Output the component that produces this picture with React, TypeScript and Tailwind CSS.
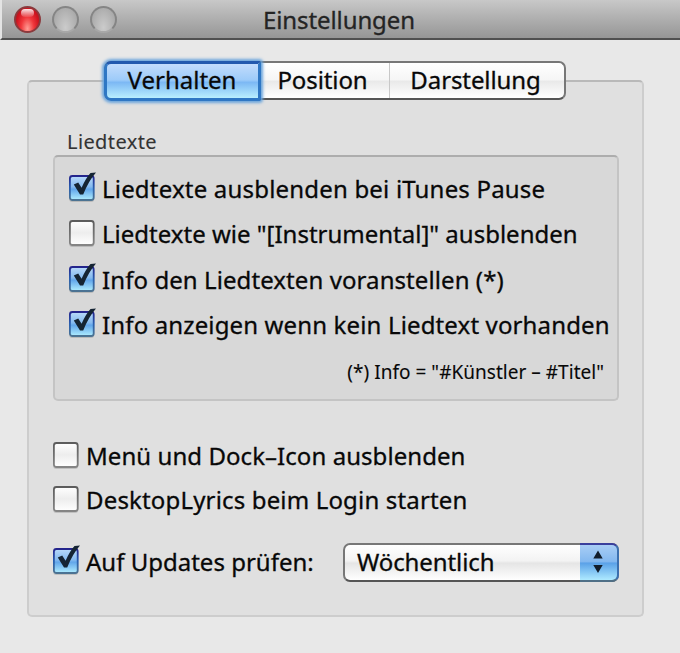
import { useState } from "react";

type CheckboxProps = {
  label: string;
  defaultChecked?: boolean;
  className?: string;
  textClassName?: string;
};

function Checkbox({ label, defaultChecked = false, className = "", textClassName = "" }: CheckboxProps) {
  const [checked, setChecked] = useState(defaultChecked);

  return (
    <button
      role="checkbox"
      aria-checked={checked}
      onClick={() => setChecked(!checked)}
      className={`flex items-center gap-[7px] text-left ${className}`}
    >
      <svg className="w-[29px] h-[34px] -mr-[3px] shrink-0" viewBox="0 0 29 34">
        <defs>
          <linearGradient id="boxOn" x1="0" y1="0" x2="0" y2="1">
            <stop offset="0" stopColor="#b9dafa" />
            <stop offset="0.45" stopColor="#86baef" />
            <stop offset="0.55" stopColor="#62a6ea" />
            <stop offset="1" stopColor="#b0eeff" />
          </linearGradient>
          <linearGradient id="boxOnEdge" x1="0" y1="0" x2="0" y2="1">
            <stop offset="0" stopColor="#24248c" />
            <stop offset="0.5" stopColor="#285fb0" />
            <stop offset="1" stopColor="#4c7392" />
          </linearGradient>
          <linearGradient id="boxOff" x1="0" y1="0" x2="0" y2="1">
            <stop offset="0" stopColor="#ffffff" />
            <stop offset="0.5" stopColor="#ededed" />
            <stop offset="1" stopColor="#ffffff" />
          </linearGradient>
          <linearGradient id="boxOffEdge" x1="0" y1="0" x2="0" y2="1">
            <stop offset="0" stopColor="#5c5c5c" />
            <stop offset="1" stopColor="#858585" />
          </linearGradient>
        </defs>
        <rect x="0.2" y="5" width="25" height="25" rx="3" fill="#000" opacity="0.14" />
        <rect
          x="0.9"
          y="4"
          width="23.8"
          height="24"
          rx="2.5"
          fill={checked ? "url(#boxOn)" : "url(#boxOff)"}
          stroke={checked ? "url(#boxOnEdge)" : "url(#boxOffEdge)"}
          strokeWidth="1.8"
        />
        {checked && (
          <path d="M4.8 12.5 L9.2 10.5 L12.6 15.8 Q16.5 6.500 21.500 1 L27 0.500 Q19.500 9 14.200 22.500 L11 22.500 Z" fill="#152433" />
        )}
      </svg>
      <span className={`whitespace-nowrap ${textClassName}`}>{label}</span>
    </button>
  );
}

function TitleBar() {
  return (
    <header className="flex items-center h-[40px] pl-[12px] gap-[11px] border-l-2 border-l-[#e4e4e4] border-b-2 border-b-[#505050] bg-linear-to-b from-[#c8c8c8] to-[#969696]">
      <span className="w-[27px] h-[27px] rounded-full border-2 border-[#8b3a3d] bg-[radial-gradient(ellipse_at_50%_90%,#ff9d95_0%,#f0373b_40%,#d01520_70%,#a91019_100%)] flex justify-center">
        <span className="w-[13px] h-[8px] mt-px rounded-full bg-linear-to-b from-white/90 to-white/10" />
      </span>
      <span className="w-[27px] h-[27px] rounded-full border-2 border-[#858585] border-b-[#a8a8a8] bg-[radial-gradient(ellipse_at_50%_85%,#cbcbcb_0%,#b4b4b4_55%,#9f9f9f_100%)]" />
      <span className="w-[27px] h-[27px] rounded-full border-2 border-[#858585] border-b-[#a8a8a8] bg-[radial-gradient(ellipse_at_50%_85%,#cbcbcb_0%,#b4b4b4_55%,#9f9f9f_100%)]" />
      <h1 className="ml-[135px] mt-[2px] text-[#242424] tracking-[-0.1px]">Einstellungen</h1>
    </header>
  );
}

export default function App() {
  return (
    <div className="w-[680px] h-[653px] overflow-hidden bg-[#e8e8e8] text-[24px] leading-[30px] text-[#080808] [-webkit-text-stroke:0.3px] font-['Noto_Sans','Open_Sans',sans-serif]">
      <TitleBar />

      <div className="px-[27px] pt-[21px]">
        {/* Segmented tabs sit across the top edge of the panel */}
        <nav className="relative z-10 flex w-[462px] h-[39px] ml-[77px] -mb-[20px] rounded-[7px] border-2 border-t-[#777] border-x-[#777] border-b-[#555] bg-[linear-gradient(#fff_0%,#f6f6f6_48%,#e9e9e9_52%,#fff_100%)]">
          <button className="w-[157px] h-[40px] -ml-[2px] -mt-[2px] pr-[1px] pb-[2px] shrink-0 rounded-l-[7px] rounded-r-[2px] border-[3px] border-[#2f77c4] border-t-[#2259ae] shadow-[0_0_3px_2px_#6ba5dc] bg-[linear-gradient(#c2dcfc_0%,#9dcbf9_47%,#7cb8f4_54%,#b9efff_100%)] whitespace-nowrap">
            Verhalten
          </button>
          <button className="w-[129px] pb-[1px] pr-[5px] shrink-0 border-r border-[#c8c8c8] tracking-[-0.1px] whitespace-nowrap">Position</button>
          <button className="flex-1 pb-[1px] pr-[3px] tracking-[-0.1px] whitespace-nowrap">Darstellung</button>
        </nav>

        <main className="w-[617px] h-[537px] pl-[24px] rounded-[5px] border-2 border-[#cdcdcd] border-t-[#b9b9b9] bg-[#e0e0e0]">
          <h2 className="pt-[47px] pl-[14px] h-[73px] text-[20px] leading-[26px] text-[#333] tracking-[0.4px] [-webkit-text-stroke:0.1px]">Liedtexte</h2>

          <section className="w-[566px] h-[246px] pt-[9px] pl-[14px] rounded-[5px] border-2 border-[#c4c4c4] border-t-[#adadad] bg-[#d8d8d8]">
            <Checkbox className="h-[45px]" label="Liedtexte ausblenden bei iTunes Pause" textClassName="tracking-[0.19px]" defaultChecked />
            <Checkbox className="h-[46px]" label={'Liedtexte wie "[Instrumental]" ausblenden'} />
            <Checkbox className="h-[45px]" label="Info den Liedtexten voranstellen (*)" textClassName="tracking-[0.08px]" defaultChecked />
            <Checkbox className="h-[45px]" label="Info anzeigen wenn kein Liedtext vorhanden" textClassName="tracking-[0.14px]" defaultChecked />
            <p className="mt-[12px] pr-[13px] text-right text-[19px] leading-[26px] tracking-[0.03px] [-webkit-text-stroke:0.1px]">(*) Info = "#Künstler – #Titel"</p>
          </section>

          <Checkbox className="h-[44px] mt-[33px]" label="Menü und Dock–Icon ausblenden" textClassName="tracking-[0.06px]" />
          <Checkbox className="h-[44px]" label="DesktopLyrics beim Login starten" textClassName="tracking-[0.16px]" />

          <div className="flex items-center mt-[19px] h-[42px]">
            <Checkbox className="w-[290px]" label="Auf Updates prüfen:" defaultChecked />
            <button className="flex w-[276px] h-[39px] rounded-[7px] border-2 border-[#777] border-b-[#555] bg-[linear-gradient(#fff_0%,#f3f3f3_45%,#e5e5e5_52%,#fff_100%)]">
              <span className="flex-1 pl-[12px] pt-[2px] text-left tracking-[-0.1px]">Wöchentlich</span>
              <span className="flex items-center justify-center w-[39px] h-[39px] -mt-[2px] -mr-[2px] pr-[1px] shrink-0 border-t-2 border-t-[#3a3f9c] border-r-2 border-r-[#3b6fae] border-b-2 border-b-[#4f6f86] rounded-r-[7px] bg-[linear-gradient(#a8cdf5_0%,#83b8ef_47%,#5ba2e8_52%,#aeeaff_100%)]">
                <svg className="w-[10px] h-[24px]" viewBox="0 0 10 24">
                  <path d="M5 0.500 L9.700 8.500 H0.300 Z M0.300 15 H9.700 L5 23 Z" fill="#111d2c" />
                </svg>
              </span>
            </button>
          </div>
        </main>
      </div>
    </div>
  );
}
